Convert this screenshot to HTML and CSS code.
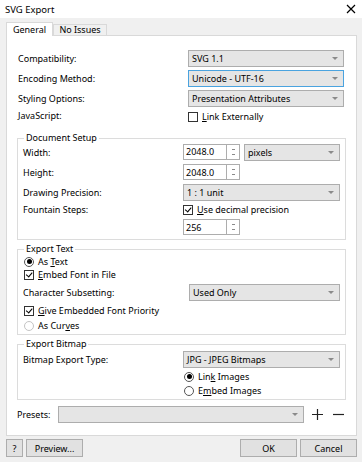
FILE: index.html
```html
<!DOCTYPE html>
<html lang="en">
<head>
    <meta charset="UTF-8">
    <meta name="viewport" content="width=device-width, initial-scale=1.0">
    <title>SVG Export</title>
    <link rel="stylesheet" href="styles.css">
</head>
<body>
    <div class="titlebar">
        <span>SVG Export</span>
        <svg class="close" width="10" height="10" viewBox="0 0 10 10">
            <path d="M1 1 L9 9 M9 1 L1 9" stroke="#000" stroke-width="1.2" fill="none"/>
        </svg>
    </div>

    <div class="tabs">
        <div class="tab active">General</div>
        <div class="tab">No Issues</div>
    </div>

    <div class="panel">
        <div class="grid top">
            <label>Compatibility:</label>
            <div class="select"><span>SVG 1.1</span><i class="arrow"></i></div>
            <label>Encoding Method:</label>
            <div class="select focus"><span>Unicode - UTF-16</span><i class="arrow"></i></div>
            <label>Styling Options:</label>
            <div class="select"><span>Presentation Attributes</span><i class="arrow"></i></div>
            <label>JavaScript:</label>
            <div class="check"><i class="box"></i><span><u>L</u>ink Externally</span></div>
        </div>

        <fieldset class="group doc">
            <legend>Document Setup</legend>
            <div class="grid">
                <label>Width:</label>
                <div class="pair">
                    <div class="spin"><span>2048.0</span><i class="updown"></i></div>
                    <div class="select unit"><span>pixels</span><i class="arrow"></i></div>
                </div>
                <label>Height:</label>
                <div class="spin"><span>2048.0</span><i class="updown"></i></div>
                <label>Drawing Precision:</label>
                <div class="select"><span>1 : 1 unit</span><i class="arrow"></i></div>
                <label>Fountain Steps:</label>
                <div class="check"><i class="box on"></i><span><u>U</u>se decimal precision</span></div>
                <label></label>
                <div class="spin"><span>256</span><i class="updown"></i></div>
            </div>
        </fieldset>

        <fieldset class="group text">
            <legend>Export Text</legend>
            <div class="check"><i class="radio on"></i><span>As <u>T</u>ext</span></div>
            <div class="check"><i class="box on"></i><span><u>E</u>mbed Font in File</span></div>
            <div class="grid subset">
                <label>Character Subsetting:</label>
                <div class="select"><span>Used Only</span><i class="arrow"></i></div>
            </div>
            <div class="check"><i class="box on"></i><span><u>G</u>ive Embedded Font Priority</span></div>
            <div class="check"><i class="radio off"></i><span>As Cur<u>v</u>es</span></div>
        </fieldset>

        <fieldset class="group bitmap">
            <legend>Export Bitmap</legend>
            <div class="grid">
                <label>Bitmap Export Type:</label>
                <div class="select"><span>JPG - JPEG Bitmaps</span><i class="arrow"></i></div>
                <label></label>
                <div class="check"><i class="radio on"></i><span>Lin<u>k</u> Images</span></div>
                <label></label>
                <div class="check"><i class="radio"></i><span>E<u>m</u>bed Images</span></div>
            </div>
        </fieldset>

        <div class="presets">
            <label>Presets:</label>
            <div class="select combo"><span></span><i class="arrow"></i></div>
            <svg class="plus" width="11" height="11" viewBox="0 0 11 11"><path d="M5.5 0 V11 M0 5.5 H11" stroke="#222" stroke-width="1.2"/></svg>
            <svg width="11" height="11" viewBox="0 0 11 11"><path d="M0 5.5 H11" stroke="#222" stroke-width="1.2"/></svg>
        </div>
    </div>

    <div class="buttons">
        <button class="btn small">?</button>
        <button class="btn">Preview...</button>
        <div class="spacer"></div>
        <button class="btn">OK</button>
        <button class="btn">Cancel</button>
    </div>
</body>
</html>
```

FILE: styles.css
```css
body {
    margin: 0;
    background-color: #f0f0f0;
    font-family: "Noto Sans", "Open Sans", sans-serif;
    font-size: 9px;
    color: #000;
    width: 362px;
    height: 462px;
    overflow: hidden;
}
.titlebar {
    height: 18px;
    background-color: #ffffff;
    display: flex;
    align-items: center;
    justify-content: space-between;
    padding: 0 6px 0 5px;
    font-size: 9.5px;
}
.tabs {
    display: flex;
    align-items: flex-end;
    height: 13px;
    margin-top: 4px;
    padding-left: 6px;
}
.tab {
    box-sizing: border-box;
    width: 54px;
    height: 11px;
    line-height: 10px;
    border: 1px solid #d9d9d9;
    border-bottom: none;
    background-color: #f0f0f0;
    text-align: center;
    white-space: nowrap;
}
.tab.active {
    width: 47px;
    height: 14px;
    line-height: 14px;
    background-color: #ffffff;
    position: relative;
    z-index: 1;
    margin-bottom: -1px;
}
.panel {
    margin: 0 5px 0 6px;
    height: 401px;
    background-color: #ffffff;
    border: 1px solid #d9d9d9;
    box-sizing: border-box;
}
.grid {
    display: grid;
    grid-template-columns: 170px 156px;
    align-items: center;
}
.grid label {
    white-space: nowrap;
}
.top {
    padding: 14px 0 0 11px;
    grid-template-rows: 17px 17px 17px 11px;
    row-gap: 3px;
}
.top .check {
    margin-top: 2px;
}
.select {
    height: 17px;
    box-sizing: border-box;
    border: 1px solid #adadad;
    background-color: #e5e5e5;
    display: flex;
    align-items: center;
    justify-content: space-between;
    padding: 0 5px 0 3px;
}
.select.focus {
    border-color: #4aa3df;
}
.arrow {
    width: 0;
    height: 0;
    border-left: 3px solid transparent;
    border-right: 3px solid transparent;
    border-top: 3px solid #8a8a8a;
}
.check {
    display: flex;
    align-items: center;
    gap: 4px;
    height: 11px;
}
.box {
    width: 8px;
    height: 8px;
    border: 1px solid #333;
    background-color: #fff;
    display: flex;
    align-items: center;
    justify-content: center;
}
.box.on::after {
    content: "";
    width: 5px;
    height: 2.5px;
    border-left: 1.3px solid #000;
    border-bottom: 1.3px solid #000;
    transform: rotate(-50deg);
    margin-top: -2px;
}
.radio {
    width: 8px;
    height: 8px;
    border: 1px solid #555;
    border-radius: 50%;
    display: flex;
    align-items: center;
    justify-content: center;
}
.radio.on::after {
    content: "";
    width: 5px;
    height: 5px;
    border-radius: 50%;
    background-color: #000;
}
.radio.off {
    border-color: #c4c4c4;
}
.group {
    margin: 7px 10px 0;
    padding: 0 5px;
    border: 1px solid #dcdcdc;
    min-width: 0;
}
.group legend {
    padding: 0 2px;
    margin-left: 1px;
    height: 12px;
    line-height: 12px;
}
.group .grid {
    grid-template-columns: 160px 157px;
}
.doc {
    margin-top: 11px;
    padding-top: 0;
    padding-bottom: 4px;
}
.doc .grid {
    grid-template-rows: 16px 16px 16px 11px 16px;
    row-gap: 4px;
}
.pair {
    display: flex;
    gap: 4px;
}
.spin {
    width: 57px;
    height: 16px;
    box-sizing: border-box;
    border: 1px solid #adadad;
    display: flex;
    justify-content: space-between;
    align-items: center;
    padding-left: 2px;
}
.updown {
    width: 12px;
    height: 100%;
    border-left: 1px solid #adadad;
    background:
        linear-gradient(#8a8a8a, #8a8a8a) center 4px / 3px 1px no-repeat,
        linear-gradient(#8a8a8a, #8a8a8a) center 9px / 3px 1px no-repeat;
}
.unit {
    flex: 1;
}
.text {
    margin-top: 3px;
    padding-top: 1px;
    padding-bottom: 1px;
    display: grid;
    grid-template-rows: 11px 11px 21px 11px 15px;
    align-items: center;
    row-gap: 2px;
}
.text .check {
    padding-left: 1px;
}
.text .subset {
    grid-template-columns: 166px 151px;
}
.bitmap {
    margin-top: 3px;
    padding-top: 1px;
    padding-bottom: 3px;
}
.bitmap .grid {
    grid-template-rows: 17px 11px 11px;
    row-gap: 3px;
}
.bitmap .check {
    padding-left: 1px;
}
.presets {
    display: flex;
    align-items: center;
    margin: 6px 0 0 10px;
}
.presets label {
    width: 41px;
}
.combo {
    width: 246px;
    margin-right: 8px;
}
.plus {
    margin-right: 10px;
}
.buttons {
    display: flex;
    gap: 3px;
    padding: 3px 5px 0 6px;
}
.btn {
    height: 18px;
    width: 57px;
    font: inherit;
    border: 1px solid #adadad;
    background-color: #e1e1e1;
    padding: 0;
}
.btn.small {
    width: 17px;
}
.spacer {
    flex: 1;
}
```
